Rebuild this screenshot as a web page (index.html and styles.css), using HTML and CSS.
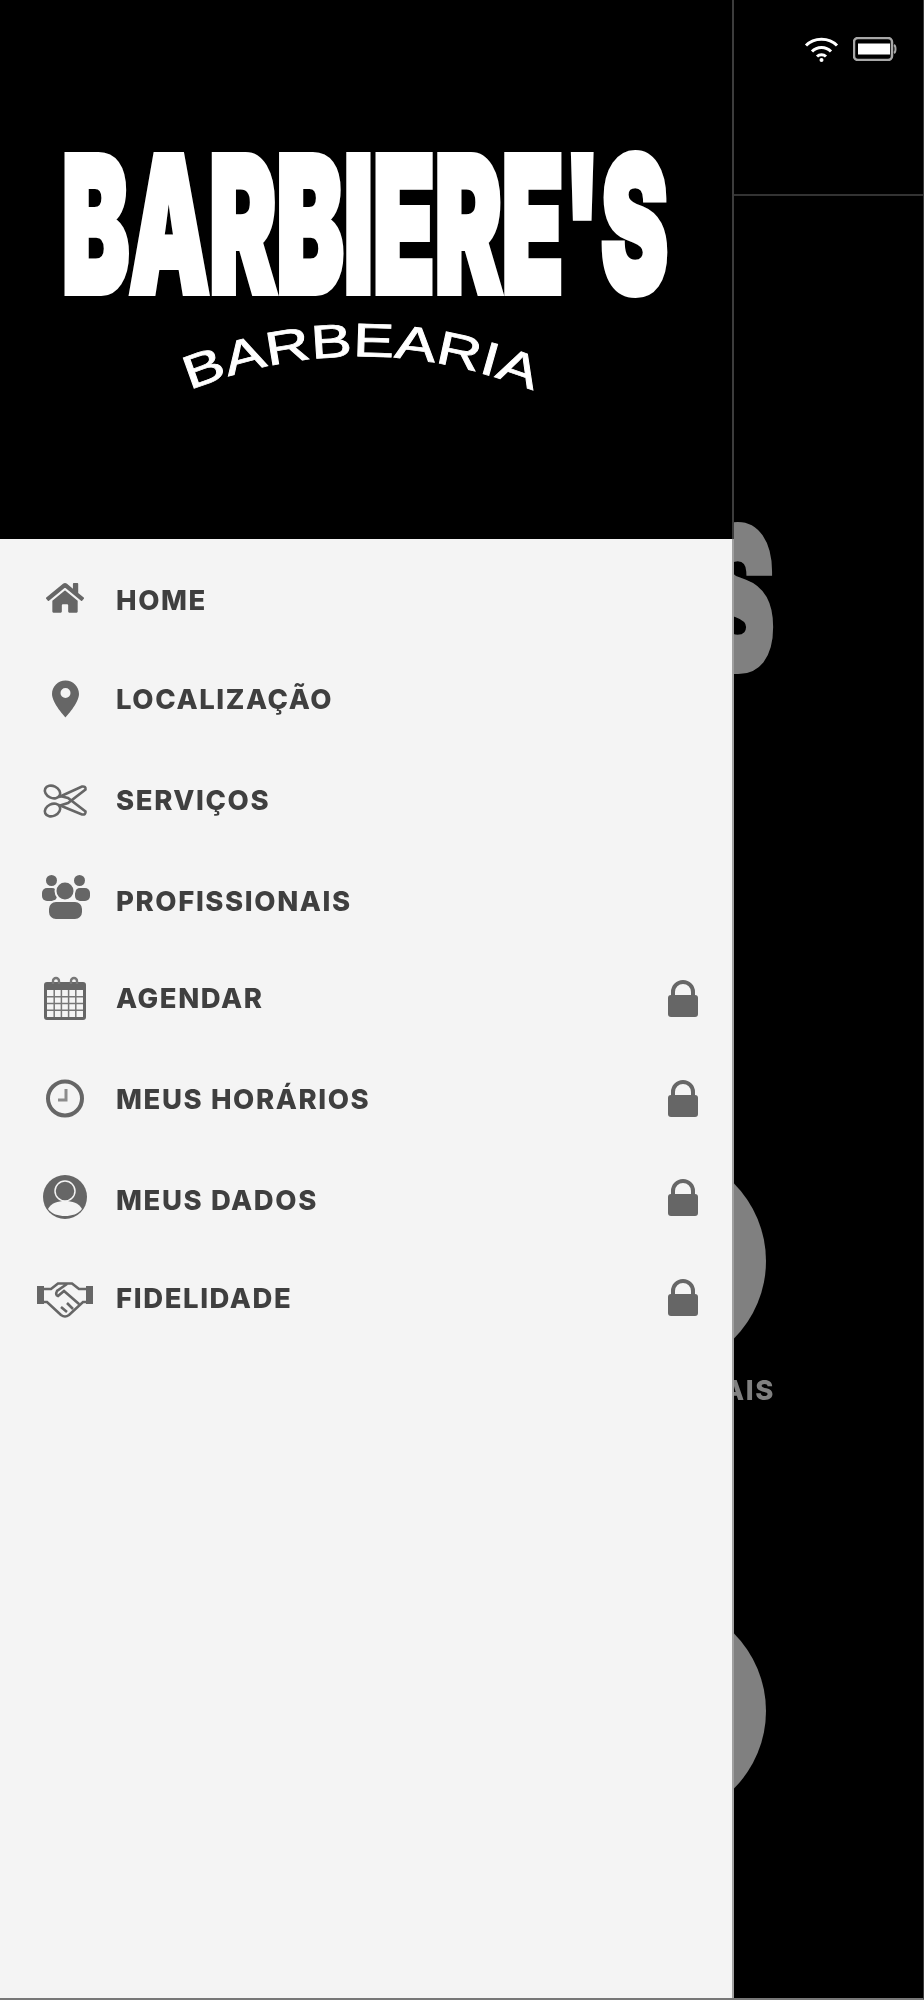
FILE: index.html
```html
<!DOCTYPE html>
<html lang="pt-BR">
<head>
<meta charset="utf-8">
<title>Barbiere's Barbearia</title>
<link rel="stylesheet" href="styles.css">
</head>
<body>
<div class="app">
  <main class="screen">
    <header class="topbar">
      <svg class="wifi" viewBox="0 0 35 27"><path class="wifi-arc" d="M2 10.500C10 2 25 2 33 10.500M8 16.500C13 11 22 11 27 16.500M13 21.500C15.500 19 19.500 19 22 21.500"/><circle class="wifi-dot" cx="17.500" cy="25" r="2"/></svg>
      <svg class="battery" viewBox="0 0 44 24"><rect class="battery-shell" x="1" y="1" width="38" height="22" rx="4"/><rect class="battery-level" x="5" y="6.500" width="32" height="11"/><path class="battery-nub" d="M41 8c2 1 2 7 0 8"/></svg>
    </header>
    <svg class="bg-title" viewBox="0 0 75 145"><text class="logo-main" x="0" y="142" textLength="72" lengthAdjust="spacingAndGlyphs">S</text></svg>
    <section class="card card-first">
      <div class="circle"></div>
      <p class="card-label">AIS</p>
    </section>
    <section class="card card-second">
      <div class="circle"></div>
    </section>
  </main>

  <aside class="drawer">
    <div class="drawer-head">
      <svg class="logo" viewBox="0 0 732 539">
        <text class="logo-main logo-white" x="62" y="292" textLength="606" lengthAdjust="spacingAndGlyphs">BARBIERE'S</text>
        <path id="arc" class="arc" d="M186 392Q360 320 542 394"/>
        <text class="logo-sub"><textPath href="#arc" textLength="352" lengthAdjust="spacingAndGlyphs" startOffset="4">BARBEARIA</textPath></text>
      </svg>
    </div>
    <nav class="menu">
      <a class="row">
        <svg class="ico" viewBox="0 0 56 44"><g transform="translate(9 3) scale(.066)"><path d="M280.37 148.26L96 300.11V464a16 16 0 0 0 16 16l112.06-.29a16 16 0 0 0 15.92-16V368a16 16 0 0 1 16-16h64a16 16 0 0 1 16 16v95.64a16 16 0 0 0 16 16.05L464 480a16 16 0 0 0 16-16V300L295.67 148.26a12.19 12.19 0 0 0-15.3 0zM571.6 251.47L488 182.56V44.05a12 12 0 0 0-12-12h-56a12 12 0 0 0-12 12v72.61L318.47 43a48 48 0 0 0-61 0L4.34 251.47a12 12 0 0 0-1.6 16.9l25.5 31A12 12 0 0 0 45.15 301l235.22-193.74a12.19 12.19 0 0 1 15.3 0L530.9 301a12 12 0 0 0 16.9-1.6l25.5-31a12 12 0 0 0-1.7-16.93z"/></g></svg>
        <span class="label">HOME</span>
      </a>
      <a class="row">
        <svg class="ico" viewBox="0 0 56 44"><path fill-rule="evenodd" d="M28.500 2.500C21 2.500 15 8.500 15 16C15 25 28.500 39.500 28.500 39.500C28.500 39.500 42 25 42 16C42 8.500 36 2.500 28.500 2.500ZM28.500 10a5 5 0 1 1 0 10a5 5 0 1 1 0-10Z"/></svg>
        <span class="label label-high">LOCALIZAÇÃO</span>
      </a>
      <a class="row">
        <svg class="ico" viewBox="0 0 56 44"><g class="line-ico"><ellipse cx="15.500" cy="15" rx="8" ry="6" transform="rotate(25 15.500 15)"/><ellipse cx="15.500" cy="33" rx="8" ry="6" transform="rotate(-25 15.500 33)"/><path d="M22 20L45 9.500Q49 9 48.500 12.500L31 26L23 28.500"/><path d="M22 28L45 37.500Q49 38 48.500 34.500L31 21L23 19"/></g></svg>
        <span class="label">SERVIÇOS</span>
      </a>
      <a class="row">
        <svg class="ico" viewBox="0 0 56 44"><circle cx="14.500" cy="3.500" r="5.500"/><circle cx="42.500" cy="3.500" r="5.500"/><rect x="5" y="11" width="15" height="13" rx="5"/><rect x="38" y="11" width="15" height="13" rx="5"/><circle class="ring" cx="28" cy="14" r="9.500"/><rect class="ring" x="11" y="24" width="35" height="19" rx="8"/></svg>
        <span class="label label-low">PROFISSIONAIS</span>
      </a>
      <a class="row">
        <svg class="ico" viewBox="0 0 56 44"><rect x="7" y="5" width="42" height="38" rx="3"/><rect class="paper" x="10" y="13" width="36" height="27"/><path class="grid" d="M17.200 13v27M24.400 13v27M31.600 13v27M38.800 13v27M10 19.750h36M10 26.500h36M10 33.250h36"/><path class="rings" d="M16 7V4a3 3 0 0 1 6 0v3M34 7V4a3 3 0 0 1 6 0v3"/></svg>
        <span class="label label-high">AGENDAR</span>
        <svg class="lock" viewBox="0 0 30 37"><path class="shackle" d="M5 16V12a10 10 0 0 1 20 0v4"/><rect y="15" width="30" height="22" rx="3"/></svg>
      </a>
      <a class="row">
        <svg class="ico" viewBox="0 0 56 44"><circle class="clock-face" cx="28" cy="22.500" r="17"/><path class="clock-hands" d="M29 13V24H21"/></svg>
        <span class="label">MEUS HORÁRIOS</span>
        <svg class="lock" viewBox="0 0 30 37"><path class="shackle" d="M5 16V12a10 10 0 0 1 20 0v4"/><rect y="15" width="30" height="22" rx="3"/></svg>
      </a>
      <a class="row">
        <svg class="ico" viewBox="0 0 56 44"><circle cx="28" cy="21" r="22"/><path class="paper" d="M11 33C14 27 21 25 28 25C35 25 42 27 45 33C41 38 35 40 28 40C21 40 15 38 11 33Z"/><circle class="user-head" cx="28" cy="15" r="10"/></svg>
        <span class="label label-low">MEUS DADOS</span>
        <svg class="lock" viewBox="0 0 30 37"><path class="shackle" d="M5 16V12a10 10 0 0 1 20 0v4"/><rect y="15" width="30" height="22" rx="3"/></svg>
      </a>
      <a class="row">
        <svg class="ico" viewBox="0 0 56 44"><rect x="0" y="10" width="7" height="18"/><rect x="49" y="10" width="7" height="18"/><path class="shake" d="M7 13H14L21 7.500H35L42 13H49M7 26H10L24 39Q28 42 32 39L46 26H49M30 8L20 15Q18 19 21 20L27 15L42 28M30 36L24 31M36 33L30 27"/></svg>
        <span class="label">FIDELIDADE</span>
        <svg class="lock" viewBox="0 0 30 37"><path class="shackle" d="M5 16V12a10 10 0 0 1 20 0v4"/><rect y="15" width="30" height="22" rx="3"/></svg>
      </a>
    </nav>
  </aside>
</div>
</body>
</html>
```
FILE: styles.css
```css
* { box-sizing: border-box; }
html, body { margin: 0; padding: 0; background: #000; }
body { font-family: Inter, "Liberation Sans", sans-serif; }

.app {
  position: relative;
  width: 924px;
  height: 2000px;
  overflow: hidden;
  background: #000;
  border-right: 1px solid #3c3c3c;
  border-bottom: 2px solid #777;
}

/* the reference is a soft, upscaled capture */
.label, .ico, .lock, .logo, .wifi, .battery, .bg-title, .card-label, .circle {
  filter: blur(.7px);
}

/* page behind the drawer */
.screen { display: flex; flex-direction: column; }
.topbar {
  display: flex;
  justify-content: flex-end;
  align-items: flex-start;
  gap: 14px;
  height: 196px;
  padding: 35px 26px 0 0;
  border-bottom: 2px solid #333;
}
.wifi { width: 35px; height: 27px; }
.wifi-arc { fill: none; stroke: #fff; stroke-width: 3; }
.wifi-dot { fill: #fff; }
.battery { width: 44px; height: 24px; margin-top: 2px; }
.battery-shell { fill: none; stroke: #a8a8a8; stroke-width: 2.500; }
.battery-level { fill: #fff; }
.battery-nub { fill: none; stroke: #a8a8a8; stroke-width: 2; }

.bg-title {
  flex: none;
  width: 77px;
  height: 150px;
  margin: 326px 0 0 700px;
  overflow: visible;
  fill: #808080;
  stroke: #808080;
}
.card { width: 220px; margin-left: 546px; display: flex; flex-direction: column; align-items: center; }
.card-first { margin-top: 479px; }
.card-second { margin-top: 195px; }
.circle { flex: none; width: 220px; height: 220px; border-radius: 50%; background: #808080; }
.card-label {
  align-self: flex-end;
  margin: 0 -9px 0 0;
  padding-top: 3px;
  white-space: nowrap;
  color: #808080;
  font-size: 27.500px;
  font-weight: 800;
  line-height: 32px;
  letter-spacing: 1.600px;
}

/* logo */
.logo-main {
  font-family: Inter, "Liberation Sans", sans-serif;
  font-size: 187px;
  font-weight: 900;
  stroke-width: 8px;
}
.logo-white { fill: #fff; stroke: #fff; }
.arc { fill: none; }
.logo-sub {
  font-family: "Liberation Sans", Arial, sans-serif;
  font-size: 47px;
  fill: #fff;
  stroke: #fff;
  stroke-width: .8px;
}

/* drawer */
.drawer {
  position: absolute;
  top: 0;
  left: 0;
  bottom: 0;
  width: 734px;
  display: flex;
  flex-direction: column;
  background: #f4f4f4;
}
.drawer-head {
  flex: none;
  height: 539px;
  background: #000;
  border-right: 2px solid #3c3c3c;
}
.logo { display: block; width: 732px; height: 539px; }
.menu {
  flex: 1;
  padding: 11px 34px 0 37px;
  border-right: 2px solid #a0a0a0;
}
.row {
  display: flex;
  align-items: center;
  gap: 23px;
  height: 99.7px;
}
.ico { flex: none; width: 56px; height: 44px; overflow: visible; fill: #666; }
.label {
  flex: 1;
  padding-top: 1px;
  color: #3f3f3f;
  font-size: 27.500px;
  font-weight: 800;
  letter-spacing: 1.600px;
  white-space: nowrap;
}
.label-low { padding-top: 4px; }
.label-high { padding-top: 0; padding-bottom: 2px; }
.lock { flex: none; width: 30px; height: 37px; fill: #666; }
.shackle { fill: none; stroke: #666; stroke-width: 4; }

/* icon parts */
.line-ico { fill: none; stroke: #666; stroke-width: 2.600; }
.ring { stroke: #f4f4f4; stroke-width: 2; }
.paper { fill: #f4f4f4; }
.grid { fill: none; stroke: #777; stroke-width: 1.500; }
.rings { fill: none; stroke: #777; stroke-width: 2.400; }
.clock-face { fill: none; stroke: #666; stroke-width: 4; }
.clock-hands { fill: none; stroke: #8c8c8c; stroke-width: 3; }
.user-head { fill: #666; stroke: #f4f4f4; stroke-width: 1.500; }
.shake { fill: none; stroke: #666; stroke-width: 2.600; }
```
